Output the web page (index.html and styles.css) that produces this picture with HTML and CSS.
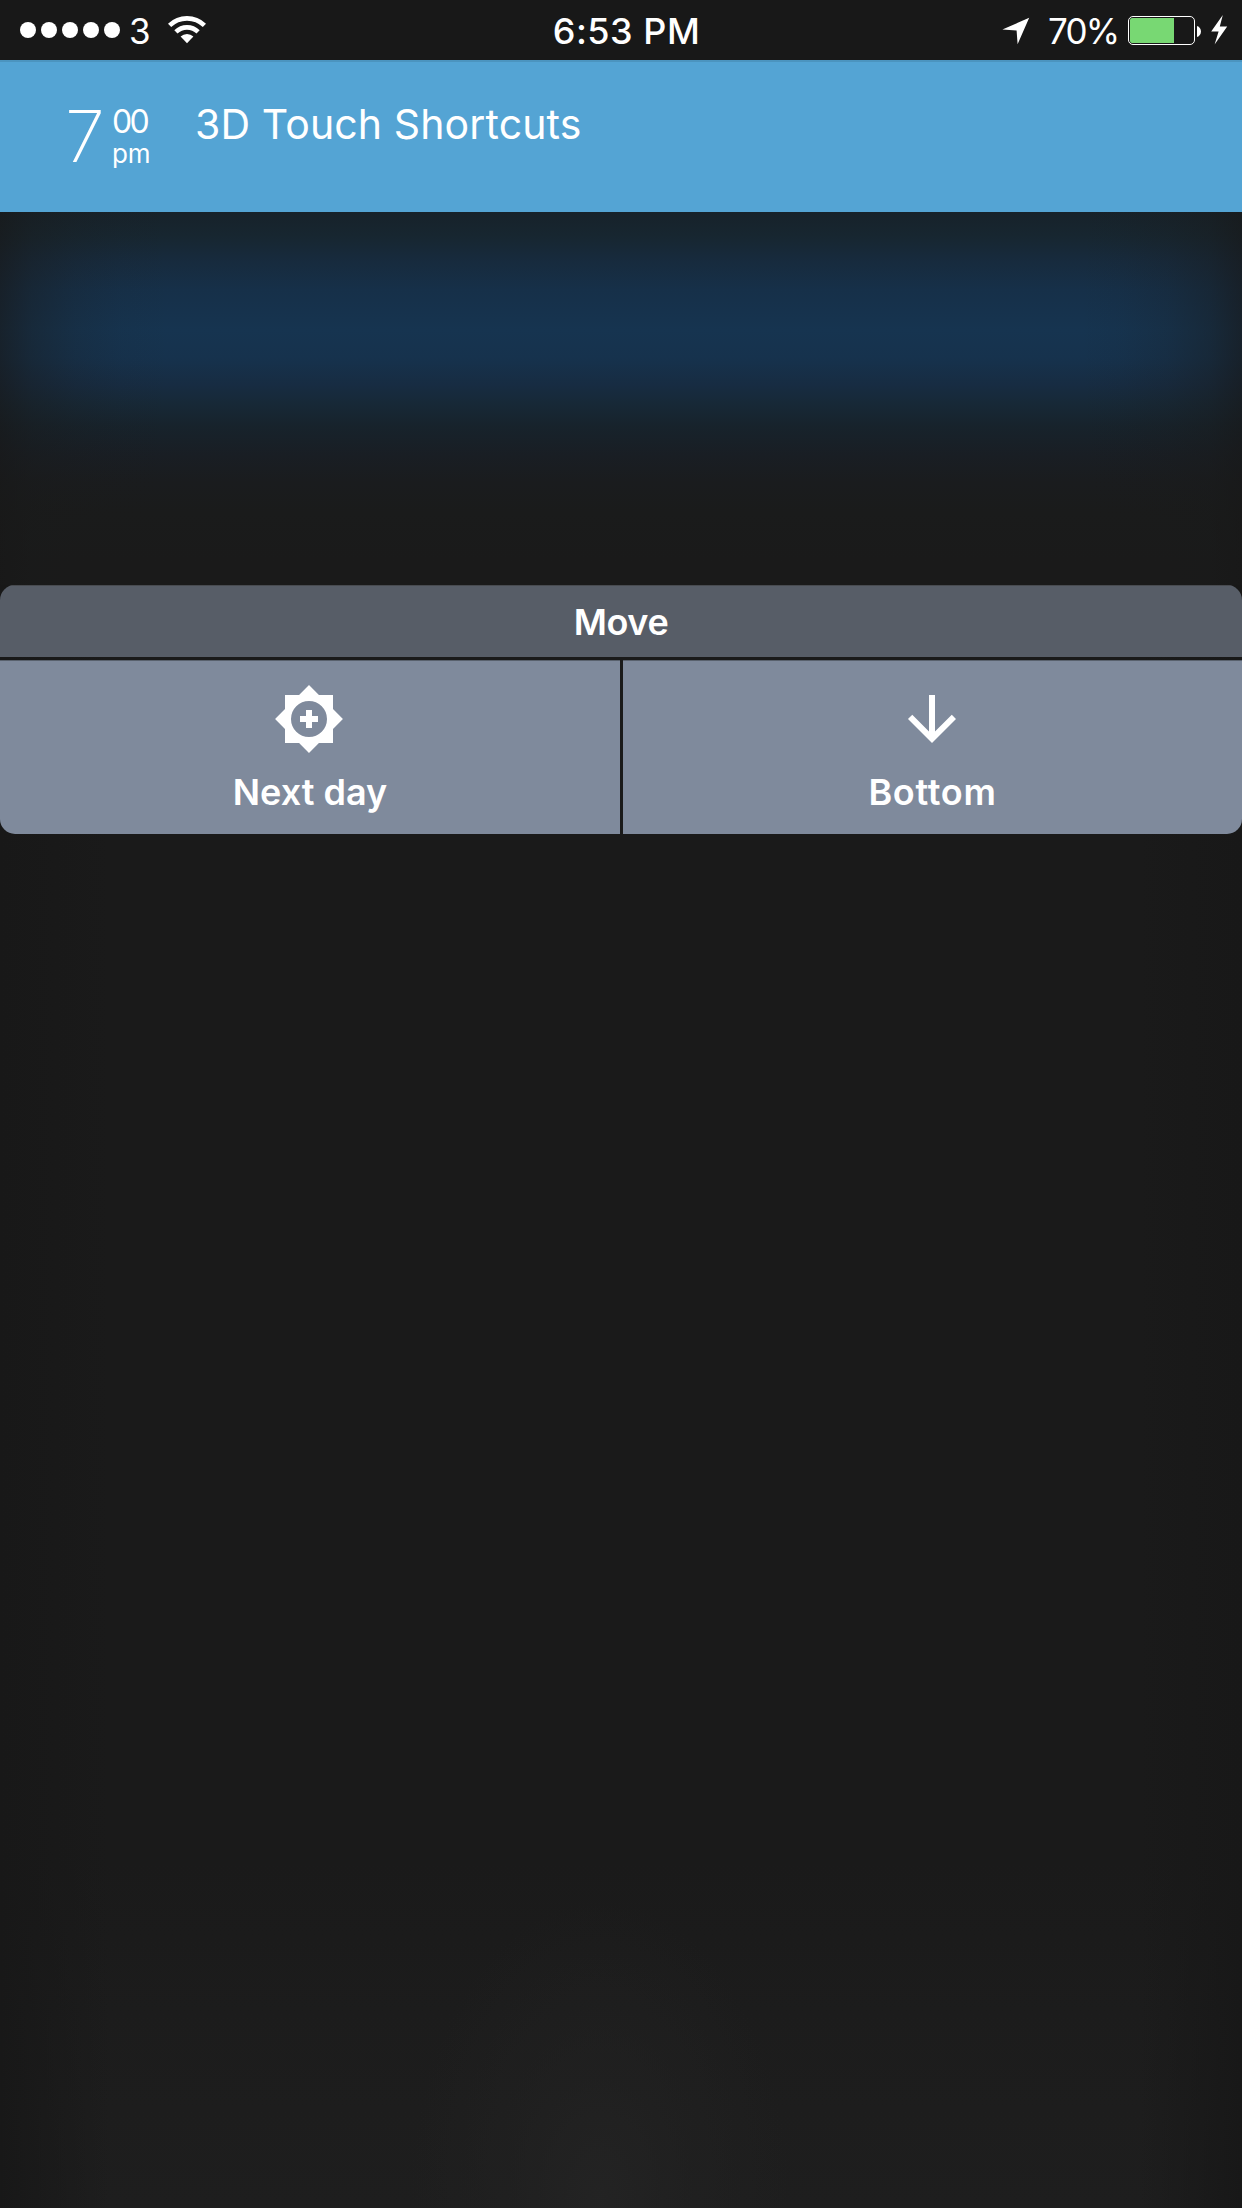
FILE: index.html
```html
<!DOCTYPE html>
<html lang="en">
<head>
<meta charset="utf-8">
<title>3D Touch Shortcuts</title>
<link rel="stylesheet" href="styles.css">
</head>
<body>
<div class="screen">
  <header class="status">
    <div class="status-left">
      <div class="signal"><i></i><i></i><i></i><i></i><i></i></div>
      <span class="carrier">3</span>
      <svg class="wifi" width="38" height="28" viewBox="0 0 38 28">
        <g fill="none" stroke="#fff" stroke-width="4.6">
          <path d="M1.6 9.4A25 25 0 0 1 36.4 9.4"/>
          <path d="M7.9 15.9A16 16 0 0 1 30.1 15.9"/>
        </g>
        <path fill="#fff" d="M12.6 20.6A9.2 9.2 0 0 1 25.4 20.6L19 27.2z"/>
      </svg>
    </div>
    <span class="clock">6:53 PM</span>
    <div class="status-right">
      <svg class="locate" width="28" height="28" viewBox="0 0 28 28"><path fill="#fff" d="M27.2 0.8L15.6 27.2 14.6 13.4 0.4 12.4z"/></svg>
      <span class="percent">70%</span>
      <div class="battery"><div class="charge" style="width:70%"></div></div>
      <svg class="nub" width="4" height="11" viewBox="0 0 4 11"><path fill="#fff" d="M0 0C5.3 1.6 5.3 9.4 0 11z"/></svg>
      <svg class="bolt" width="17" height="30" viewBox="0 0 17 30"><path fill="#fff" d="M11.8 0L0.2 16.6 7.6 16.6 3.6 29.4 16.2 11.6 8.8 11.6z"/></svg>
    </div>
  </header>

  <section class="event">
    <div class="time">
      <span class="hour">7</span>
      <div class="minutes"><span class="min">00</span><span class="ampm">pm</span></div>
    </div>
    <h1 class="title">3D Touch Shortcuts</h1>
  </section>

  <main class="backdrop">
    <section class="panel">
      <h2 class="panel-title"><span>Move</span></h2>
      <div class="actions">
        <div class="action">
          <svg width="72" height="72" viewBox="0 0 24 24"><path fill="#fff" fill-rule="evenodd" d="M20 15.31L23.31 12 20 8.69V4h-4.69L12 .69 8.69 4H4v4.69L.69 12 4 15.31V20h4.69L12 23.31 15.31 20H20zM12 18a6 6 0 1 1 0-12 6 6 0 0 1 0 12z"/><path fill="#fff" d="M11 9h2v2h2v2h-2v2h-2v-2H9v-2h2z"/></svg>
          <span class="label next">Next day</span>
        </div>
        <div class="action">
          <svg width="72" height="72" viewBox="0 0 24 24"><path fill="#fff" d="M20 12l-1.41-1.41L13 16.17V4h-2v12.17l-5.58-5.59L4 12l8 8 8-8z"/></svg>
          <span class="label bottom">Bottom</span>
        </div>
      </div>
    </section>
  </main>
</div>
</body>
</html>
```
FILE: styles.css
```css
* { box-sizing: border-box; }
body { margin: 0; background: #1a1a1a; }
.screen {
  width: 1242px;
  height: 2208px;
  display: flex;
  flex-direction: column;
  overflow: hidden;
  color: #fff;
  font-family: Inter, "Liberation Sans", sans-serif;
  white-space: nowrap;
}
svg { display: block; flex: none; }

.status {
  height: 60px;
  flex: none;
  display: grid;
  grid-template-columns: 1fr auto 1fr;
  background: #181818;
  font-size: 36px;
  line-height: 63px;
}
.status-left, .status-right { display: flex; align-items: flex-start; }
.status-left { padding-left: 20px; }
.status-right { justify-content: flex-end; padding-right: 14px; }
.signal { display: flex; gap: 5px; margin-top: 22px; }
.signal i { width: 16px; height: 16px; border-radius: 50%; background: #fff; }
.carrier { width: 38px; margin-left: 9px; font-weight: 400; font-size: 35px; letter-spacing: -1px; }
.wifi { margin: 16px 0 0 1px; }
.clock { padding-left: 11px; font-weight: 500; letter-spacing: 0.5px; }
.locate { margin-top: 17px; }
.percent { width: 73px; margin: 0 7px 0 18px; font-weight: 400; font-size: 35px; letter-spacing: -1.8px; }
.battery {
  width: 67px;
  height: 29px;
  margin-top: 16px;
  padding: 1px;
  border: 1px solid #fff;
  border-radius: 5px;
}
.charge { height: 100%; background: #78d873; border-radius: 2px 0 0 2px; }
.nub { margin: 26px 10px 0 2px; }
.bolt { margin-top: 15px; }

.event {
  height: 152px;
  flex: none;
  display: flex;
  align-items: flex-start;
  background: #54a4d4;
  border-top: 2px solid #4b94bf;
  padding-left: 65px;
}
.time { display: flex; width: 130px; }
.hour { width: 47px; margin-top: 38px; font-size: 72px; font-weight: 200; line-height: 72px; }
.minutes { display: flex; flex-direction: column; padding-top: 43px; font-weight: 400; }
.min { font-size: 32px; line-height: 34px; letter-spacing: -2.8px; }
.ampm { font-size: 26px; line-height: 30px; letter-spacing: -0.2px; }
.title { margin: 37px 0 0; font-size: 41px; font-weight: 400; line-height: 50px; letter-spacing: 0.12px; }

.backdrop {
  flex: 1;
  padding-top: 373px;
  background:
    linear-gradient(90deg, rgba(24,24,24,.65), rgba(25,26,26,.4) 32px, rgba(26,26,26,.18) 75px, rgba(26,26,26,.05) 120px, transparent 170px, transparent 1080px, rgba(26,26,26,.05) 1122px, rgba(26,26,26,.18) 1167px, rgba(25,26,26,.4) 1210px, rgba(24,24,24,.65)) 0 0 / 100% 373px no-repeat,
    radial-gradient(ellipse 190px 300px at 600px 1990px, rgba(36,36,36,.9), rgba(34,34,34,.55) 45%, transparent),
    linear-gradient(90deg, #181818, transparent 110px, transparent 1140px, #181818) 0 373px no-repeat,
    linear-gradient(#17222a 0, #172630 23px, #172b3e 50px, #163049 78px, #163450 118px, #16324d 146px, #172c42 173px, #172938 190px, #17232c 213px, #191e24 243px, #1a1c1e 270px, #1a1b1b 300px, #1a1a1a 350px, #1a1a1a 1650px, #1c1c1c 1800px, #1e1e1e);
}
.panel { border-radius: 15px; overflow: hidden; }
.panel-title {
  margin: 0;
  height: 72px;
  background: #575d67;
  border-top: 1px solid #484b50;
  font-size: 36px;
  font-weight: 600;
  line-height: 72px;
  letter-spacing: -0.4px;
  text-align: center;
}
.actions {
  display: grid;
  grid-template-columns: 620px 1fr;
  gap: 3px;
  margin-top: 3px;
  height: 174px;
}
.action {
  display: flex;
  flex-direction: column;
  align-items: center;
  padding-top: 22px;
  background: #7f8a9c;
  border-top: 1px solid #59616d;
}
.action svg { margin-right: 2px; }
.label { margin-top: 11px; font-size: 36px; font-weight: 600; line-height: 52px; }
.label.bottom { letter-spacing: 0.7px; }
```
